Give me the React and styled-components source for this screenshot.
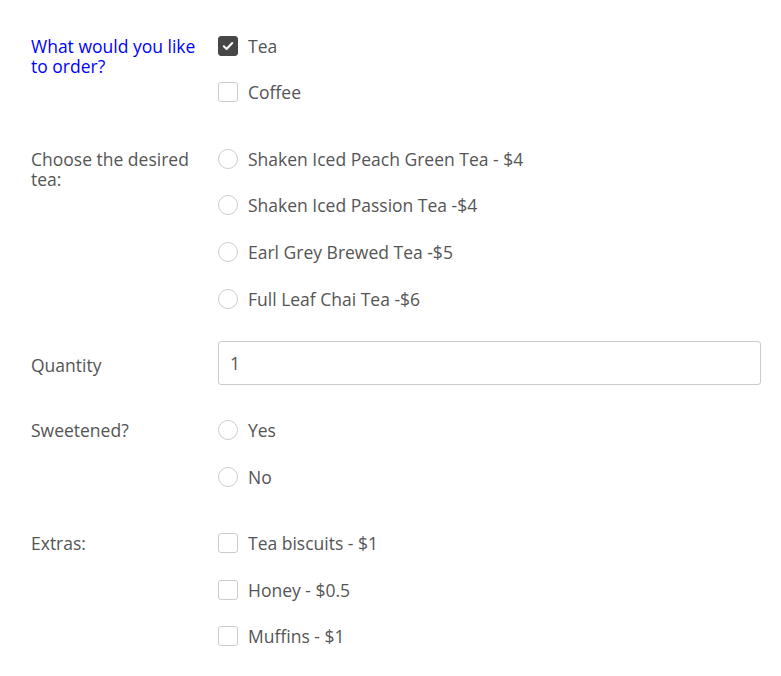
import React, { useState } from "react";
import styled, { createGlobalStyle } from "styled-components";

const GlobalStyle = createGlobalStyle`
  body {
    margin: 0;
    background: #fff;
    font-family: "Open Sans", "Liberation Sans", sans-serif;
    font-size: 17.5px;
    color: #555;
  }
`;

const teas = [
  "Shaken Iced Peach Green Tea - $4",
  "Shaken Iced Passion Tea -$4",
  "Earl Grey Brewed Tea -$5",
  "Full Leaf Chai Tea -$6",
];

const extras = ["Tea biscuits - $1", "Honey - $0.5", "Muffins - $1"];

const CheckIcon = () => (
  <svg width="14" height="14" viewBox="0 0 14 14">
    <path
      d="M2.8 7.2 L5.6 10 L11.2 4"
      fill="none"
      stroke="#fff"
      strokeWidth="2"
      strokeLinecap="round"
      strokeLinejoin="round"
    />
  </svg>
);

const App = () => {
  const [order, setOrder] = useState({ Tea: true, Coffee: false });
  const [tea, setTea] = useState(null);
  const [sweet, setSweet] = useState(null);
  const [picked, setPicked] = useState({});
  const [qty, setQty] = useState("1");

  return (
    <>
      <GlobalStyle />
      <Form>
        <Row>
          <Label highlight>What would you like to order?</Label>
          <Options>
            {["Tea", "Coffee"].map((o) => (
              <Option key={o} onClick={() => setOrder((v) => ({ ...v, [o]: !v[o] }))}>
                <Box checked={order[o]}>{order[o] && <CheckIcon />}</Box>
                {o}
              </Option>
            ))}
          </Options>
        </Row>

        <Row>
          <Label>Choose the desired tea:</Label>
          <Options>
            {teas.map((t) => (
              <Option key={t} onClick={() => setTea(t)}>
                <Radio checked={tea === t} />
                {t}
              </Option>
            ))}
          </Options>
        </Row>

        <QtyRow>
          <QtyLabel>Quantity</QtyLabel>
          <Input value={qty} onChange={(e) => setQty(e.target.value)} />
        </QtyRow>

        <Row>
          <Label>Sweetened?</Label>
          <Options>
            {["Yes", "No"].map((s) => (
              <Option key={s} onClick={() => setSweet(s)}>
                <Radio checked={sweet === s} />
                {s}
              </Option>
            ))}
          </Options>
        </Row>

        <Row>
          <Label>Extras:</Label>
          <Options>
            {extras.map((x) => (
              <Option key={x} onClick={() => setPicked((v) => ({ ...v, [x]: !v[x] }))}>
                <Box checked={picked[x]}>{picked[x] && <CheckIcon />}</Box>
                {x}
              </Option>
            ))}
          </Options>
        </Row>
      </Form>
    </>
  );
};
export default App;

const Form = styled.form`
  display: flex;
  flex-direction: column;
  gap: 19.5px;
  padding: 22.5px 20px 20px 31px;
`;

const Row = styled.div`
  display: grid;
  grid-template-columns: 187px 1fr;
  align-items: start;
`;

const QtyRow = styled(Row)`
  align-items: center;
  padding-bottom: 2px;
`;

const Label = styled.div`
  padding: 13.5px 16px 0 0;
  line-height: 20px;
  color: ${(p) => (p.highlight ? "#0000ff" : "#555")};
`;

const QtyLabel = styled(Label)`
  padding-top: 3px;
`;

const Options = styled.div`
  display: flex;
  flex-direction: column;
`;

const Option = styled.label`
  display: flex;
  align-items: center;
  gap: 10px;
  height: 46.67px;
  cursor: pointer;
`;

const Box = styled.span`
  display: flex;
  align-items: center;
  justify-content: center;
  box-sizing: border-box;
  width: 20px;
  height: 20px;
  border-radius: 3px;
  border: 1px solid ${(p) => (p.checked ? "#474747" : "#ccc")};
  background: ${(p) => (p.checked ? "#474747" : "#fff")};
`;

const Radio = styled.span`
  box-sizing: border-box;
  width: 20px;
  height: 20px;
  border-radius: 50%;
  border: ${(p) => (p.checked ? "6px solid #474747" : "1px solid #ccc")};
  background: #fff;
`;

const Input = styled.input`
  box-sizing: border-box;
  width: 100%;
  height: 44px;
  padding: 0 11px;
  border: 1px solid #ccc;
  border-radius: 3px;
  font-family: inherit;
  font-size: 17.5px;
  color: #555;
  outline: none;
`;
